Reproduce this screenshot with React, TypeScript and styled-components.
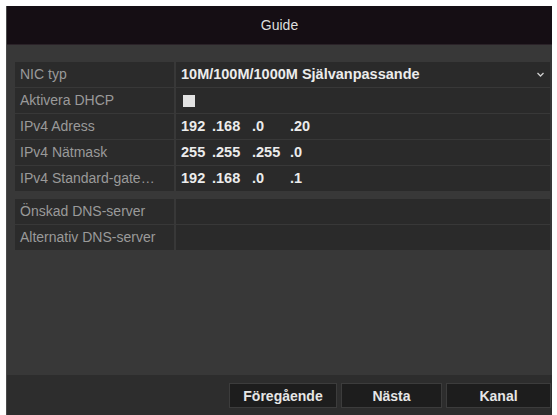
import React from "react";
import styled, { createGlobalStyle } from "styled-components";

const Global = createGlobalStyle`
  html, body { margin: 0; padding: 0; background: #ffffff; }
  body { font-family: "Liberation Sans", Arial, sans-serif; }
  * { box-sizing: border-box; }
`;

const Page = styled.div`
  width: 557px;
  height: 415px;
  padding: 6px 5px 0 6px;
  display: flex;
`;

const Dialog = styled.div`
  flex: 1;
  display: flex;
  flex-direction: column;
  background: #383838;
  border-left: 1px solid #4a4a4a;
`;

const TitleBar = styled.div`
  height: 39px;
  background: #150e14;
  color: #dedede;
  font-size: 14px;
  display: flex;
  align-items: center;
  justify-content: center;
  border-bottom: 1px solid #2a2228;
`;

const Body = styled.div`
  flex: 1;
  padding: 17px 2px 0 8px;
  display: flex;
  flex-direction: column;
  gap: 8px;
`;

const Group = styled.div`
  display: flex;
  flex-direction: column;
  gap: 1px;
`;

const Row = styled.div`
  display: grid;
  grid-template-columns: 159px 1fr;
  column-gap: 2px;
  height: 25px;
`;

const Label = styled.div`
  background: #2b2b2b;
  color: #9a9a9a;
  font-size: 14px;
  line-height: 25px;
  padding: 0 15px 0 5px;
  white-space: nowrap;
  overflow: hidden;
  text-overflow: ellipsis;
`;

const Value = styled.div`
  background: #2a2a2a;
  color: #ececec;
  font-size: 14.5px;
  font-weight: bold;
  line-height: 25px;
  padding-left: 5px;
  padding-right: 6px;
  display: flex;
  align-items: center;
  white-space: nowrap;
`;

const SelectText = styled.span`
  flex: 1;
`;

const Check = styled.span`
  width: 12px;
  height: 12px;
  margin-left: 2px;
  background: #e2e2e2;
  display: inline-block;
`;

const Seg = styled.span<{ $w: number }>`
  display: inline-block;
  width: ${(p) => p.$w}px;
`;

const Footer = styled.div`
  height: 40px;
  background: #2d2d2d;
  display: flex;
  justify-content: flex-end;
  align-items: flex-start;
  padding: 8px 1px 0 0;
  gap: 4px;
`;

const Button = styled.div<{ $w: number }>`
  width: ${(p) => p.$w}px;
  height: 25px;
  background: #1d1d1d;
  border: 1px solid #3c3c3c;
  color: #e6e6e6;
  font-size: 14px;
  font-weight: bold;
  display: flex;
  align-items: center;
  justify-content: center;
`;

const Arrow = () => (
  <svg width="7" height="5" viewBox="0 0 7 5">
    <path d="M0.5 1 L3.5 4 L6.5 1" fill="none" stroke="#cfcfcf" strokeWidth="1.3" />
  </svg>
);

const IP = ({ parts }: { parts: string[] }) => (
  <>
    <Seg $w={31}>{parts[0]}</Seg>
    <Seg $w={40}>.{parts[1]}</Seg>
    <Seg $w={38}>.{parts[2]}</Seg>
    <Seg $w={30}>.{parts[3]}</Seg>
  </>
);

export default function App() {
  return (
    <>
      <Global />
      <Page>
        <Dialog>
          <TitleBar>Guide</TitleBar>
          <Body>
            <Group>
              <Row>
                <Label>NIC typ</Label>
                <Value>
                  <SelectText>10M/100M/1000M Självanpassande</SelectText>
                  <Arrow />
                </Value>
              </Row>
              <Row>
                <Label>Aktivera DHCP</Label>
                <Value>
                  <Check />
                </Value>
              </Row>
              <Row>
                <Label>IPv4 Adress</Label>
                <Value>
                  <IP parts={["192", "168", "0", "20"]} />
                </Value>
              </Row>
              <Row>
                <Label>IPv4 Nätmask</Label>
                <Value>
                  <IP parts={["255", "255", "255", "0"]} />
                </Value>
              </Row>
              <Row>
                <Label>IPv4 Standard-gateway</Label>
                <Value>
                  <IP parts={["192", "168", "0", "1"]} />
                </Value>
              </Row>
            </Group>
            <Group>
              <Row>
                <Label>Önskad DNS-server</Label>
                <Value />
              </Row>
              <Row>
                <Label>Alternativ DNS-server</Label>
                <Value />
              </Row>
            </Group>
          </Body>
          <Footer>
            <Button $w={108}>Föregående</Button>
            <Button $w={101}>Nästa</Button>
            <Button $w={105}>Kanal</Button>
          </Footer>
        </Dialog>
      </Page>
    </>
  );
}
